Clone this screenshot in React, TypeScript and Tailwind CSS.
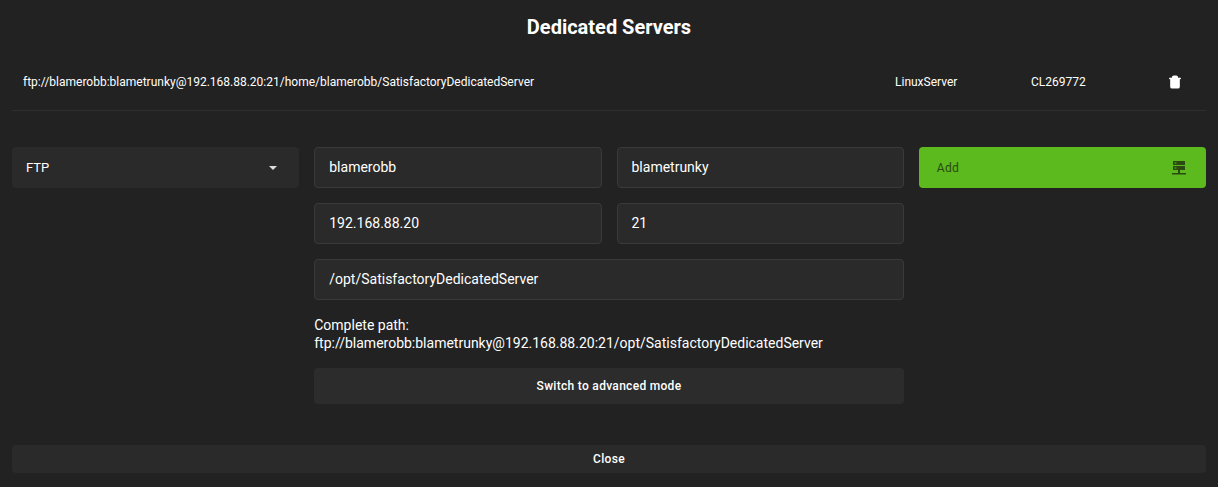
import { Trash2 } from 'lucide-react'

function ServerIcon() {
  return (
    <svg width="14" height="16" viewBox="0 0 14 16" fill="#2b4a12">
      <rect x="1" y="1" width="12" height="4" rx="0.5" />
      <rect x="1" y="6" width="12" height="4" rx="0.5" />
      <rect x="6" y="10" width="2" height="3" />
      <rect x="0" y="13" width="14" height="1.5" />
      <rect x="2.5" y="2.5" width="2" height="1" fill="#5cb91e" />
      <rect x="2.5" y="7.5" width="2" height="1" fill="#5cb91e" />
    </svg>
  )
}

function Field({ value }: { value: string }) {
  return (
    <div className="flex h-[41px] items-center rounded border border-[#3a3a3a] bg-[#2a2a2a] px-[14px] text-[14px] text-white">
      {value}
    </div>
  )
}

export default function App() {
  return (
    <div className="h-[487px] w-[1218px] bg-[#222222] text-white" style={{ fontFamily: 'Roboto, "Liberation Sans", sans-serif' }}>
      <div className="flex h-[53px] items-center justify-center text-[20px] font-bold">Dedicated Servers</div>
      <div className="mx-[12px] flex h-[58px] items-center border-b border-[#2e2e2e] pl-[11px] text-[12px]">
        <span className="flex-1">ftp://blamerobb:blametrunky@192.168.88.20:21/home/blamerobb/SatisfactoryDedicatedServer</span>
        <span className="w-[136px]">LinuxServer</span>
        <span className="w-[137px]">CL269772</span>
        <span className="w-[38px]"><Trash2 size={14} fill="white" strokeWidth={2.5} /></span>
      </div>
      <div className="mt-[36px] grid grid-cols-4 gap-x-[15px] px-[12px]">
        <div className="flex h-[41px] items-center justify-between rounded bg-[#2a2a2a] px-[14px] text-[13px]">
          <span>FTP</span>
          <span className="mr-[8px] h-0 w-0 border-x-[4px] border-t-[4px] border-x-transparent border-t-[#ddd]" />
        </div>
        <div className="col-span-2 flex flex-col gap-[15px]">
          <div className="grid grid-cols-2 gap-[15px]">
            <Field value="blamerobb" />
            <Field value="blametrunky" />
            <Field value="192.168.88.20" />
            <Field value="21" />
          </div>
          <Field value="/opt/SatisfactoryDedicatedServer" />
          <div className="mt-[1px] text-[14px] leading-[18px]">
            Complete path:
            <br />
            ftp://blamerobb:blametrunky@192.168.88.20:21/opt/SatisfactoryDedicatedServer
          </div>
          <div className="mt-[1px] flex h-[36px] items-center justify-center rounded bg-[#2c2c2c] text-[12px] font-medium tracking-wide">
            Switch to advanced mode
          </div>
        </div>
        <div className="flex h-[41px] items-center justify-between rounded bg-[#5cb91e] pl-[18px] pr-[20px] text-[12px] tracking-wide text-[#2b4a12]">
          <span>Add</span>
          <ServerIcon />
        </div>
      </div>
      <div className="mx-[12px] mt-[41px] flex h-[28px] items-center justify-center rounded bg-[#2a2a2a] text-[12px] font-medium tracking-wide">
        Close
      </div>
    </div>
  )
}
